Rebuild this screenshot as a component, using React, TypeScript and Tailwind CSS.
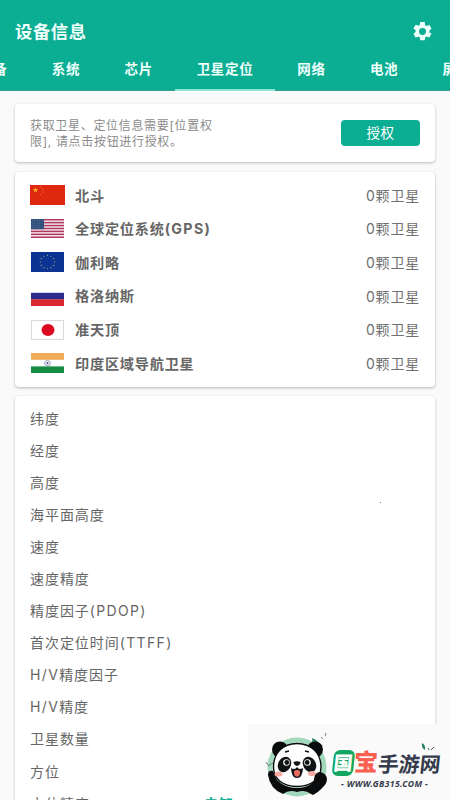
import type { ReactNode } from "react";

const tabs = ["设备", "系统", "芯片", "卫星定位", "网络", "电池", "屏幕"];

const details = [
	"纬度",
	"经度",
	"高度",
	"海平面高度",
	"速度",
	"速度精度",
	"精度因子(PDOP)",
	"首次定位时间(TTFF)",
	"H/V精度因子",
	"H/V精度",
	"卫星数量",
	"方位",
];

const STAR = "M0,-1 L.23,-.32 L.95,-.31 L.37,.12 L.59,.81 L0,.4 L-.59,.81 L-.37,.12 L-.95,-.31 L-.23,-.32Z";

function ChinaFlag() {
	return (
		<svg width="35" height="20" viewBox="0 0 35 20">
			<rect width="35" height="20" fill="#de2910" />
			<path d={STAR} fill="#ffb02e" transform="translate(5.5 5.2) scale(2.9)" />
			{[[10.8, 2], [13, 4], [13, 7], [10.8, 9.2]].map(([x, y]) => (
				<path key={y} d={STAR} fill="#f58a28" transform={`translate(${x} ${y}) scale(1)`} />
			))}
		</svg>
	);
}

function UsaFlag() {
	return (
		<svg width="33" height="19" viewBox="0 0 33 19">
			<rect width="33" height="19" fill="#f4e6ec" />
			{[0, 1, 2, 3, 4, 5, 6].map((i) => (
				<rect key={i} y={i * 2.92} width="33" height="1.46" fill="#b0365c" />
			))}
			<rect width="13" height="10.2" fill="#30507c" />
			{[0, 1, 2, 3].map((r) =>
				[0, 1, 2, 3, 4].map((c) => (
					<circle key={`${r}-${c}`} cx={1.6 + c * 2.4} cy={1.5 + r * 2.4} r=".4" fill="#8fa3bf" />
				))
			)}
		</svg>
	);
}

function EuFlag() {
	return (
		<svg width="33" height="20" viewBox="0 0 33 20">
			<rect width="33" height="20" fill="#0a3394" />
			{Array.from({ length: 12 }, (_, i) => {
				const a = (i * Math.PI) / 6;
				return (
					<path
						key={i}
						d={STAR}
						fill="#b3b765"
						transform={`translate(${16.5 + 7.2 * Math.sin(a)} ${10 - 6.7 * Math.cos(a)}) scale(1)`}
					/>
				);
			})}
		</svg>
	);
}

function RussiaFlag() {
	return (
		<svg width="33" height="20" viewBox="0 0 33 20">
			<rect width="33" height="20" fill="#fff" />
			<rect y="6.8" width="33" height="6.7" fill="#2b2c8b" />
			<rect y="13.3" width="33" height="6.7" fill="#d92830" />
		</svg>
	);
}

function JapanFlag() {
	return (
		<svg width="33" height="20" viewBox="0 0 33 20">
			<rect x=".5" y=".5" width="32" height="19" fill="#fefefe" stroke="#d9d9d9" />
			<ellipse cx="17" cy="10" rx="6.5" ry="5.9" fill="#dc0a1e" />
		</svg>
	);
}

function IndiaFlag() {
	return (
		<svg width="33" height="20" viewBox="0 0 33 20">
			<rect width="33" height="20" fill="#fff" />
			<rect width="33" height="6.8" fill="#f1ac59" />
			<rect y="13.4" width="33" height="6.6" fill="#168d45" />
			<ellipse cx="16.5" cy="10.2" rx="2.9" ry="2.6" fill="none" stroke="#73779b" strokeWidth=".7" />
			<circle cx="16.5" cy="10.2" r="1.1" fill="#54598a" />
		</svg>
	);
}

const satellites: { name: string; flag: ReactNode }[] = [
	{ name: "北斗", flag: <ChinaFlag /> },
	{ name: "全球定位系统(GPS)", flag: <UsaFlag /> },
	{ name: "伽利略", flag: <EuFlag /> },
	{ name: "格洛纳斯", flag: <RussiaFlag /> },
	{ name: "准天顶", flag: <JapanFlag /> },
	{ name: "印度区域导航卫星", flag: <IndiaFlag /> },
];

// latin abbreviations are set a little wider than the chinese text
function Label({ text }: { text: string }) {
	return (
		<>
			{text.split(/([A-Z/()]+)/).map((part, i) =>
				i % 2 ? (
					<span key={i} className="tracking-[1.35px]">
						{part}
					</span>
				) : (
					part
				)
			)}
		</>
	);
}

function Panda() {
	return (
		<svg className="absolute left-3 top-2" width="76" height="68" viewBox="0 0 76 68">
			<circle cx="37" cy="35" r="27" fill="#d9f1e4" stroke="#a3d8bd" strokeWidth="5" />
			<path d="M51 14Q53 9 52 6Q56 7 59 11L63 14Z" fill="#27835d" />
			<path d="M61 5l2 2M65 4l1-3M8 34l5-3M6 30l2 3" stroke="#46685a" strokeWidth=".8" />
			{/* ears */}
			<circle cx="20" cy="17.5" r="8" fill="#090b0c" />
			<circle cx="55" cy="17.5" r="8" fill="#090b0c" />
			{/* body */}
			<path d="M8 43Q8 38 13 39L17 48Q25 56 37 56Q49 56 55 48L58 46L65 50Q63 58 53 63L51 62Q45 57 37 60Q29 57 23 62Q10 57 8 43Z" fill="#090b0c" />
			{/* face */}
			<path d="M37 11.5C52 11.5 61 22 61 35C61 47 51 54.5 37 54.5C23 54.5 13.5 47 13.5 35C13.5 22 22 11.5 37 11.5Z" fill="#fff" stroke="#090b0c" strokeWidth="1.4" />
			<ellipse cx="24.5" cy="32.5" rx="6.3" ry="8" transform="rotate(30 24.5 32.5)" fill="#101314" />
			<ellipse cx="49.5" cy="32.5" rx="6.3" ry="8" transform="rotate(-30 49.5 32.5)" fill="#101314" />
			<circle cx="26.5" cy="30.5" r="3.3" fill="#fff" />
			<circle cx="47.5" cy="30.5" r="3.3" fill="#fff" />
			<circle cx="26.8" cy="30.5" r="2.4" fill="#101314" />
			<circle cx="47.2" cy="30.5" r="2.4" fill="#101314" />
			<path d="M25 20l4-1M45 19l4 1" stroke="#101314" strokeWidth="1.3" />
			<path d="M33.5 30Q37 28.5 40.5 30Q40 33.5 37 34Q34 33.5 33.5 30Z" fill="#101314" />
			<path d="M31 36Q35 38.5 37 35Q39 38.5 43 36Q42.5 46 37 46Q31.5 46 31 36Z" fill="#101314" />
			<path d="M34 39Q37 37 40 39Q40.5 44.5 37 44.8Q33.5 44.5 34 39Z" fill="#eb6b61" />
			<ellipse cx="18.5" cy="42" rx="4" ry="2.6" fill="#f6aaa0" />
			<ellipse cx="52" cy="41.5" rx="4" ry="2.6" fill="#f6aaa0" />
			{/* raised paw */}
			<path d="M54 47Q55 40 60 40Q67 41 67 48Q66 54 60 57L53 54Z" fill="#090b0c" />
		</svg>
	);
}

function Watermark() {
	return (
		<div className="absolute bottom-0 right-0 h-[76px] w-[202px] bg-[#fafafa]">
			<Panda />
			<svg className="absolute left-[173px] top-[18px]" width="16" height="10" viewBox="0 0 16 10">
				<path d="M1 1Q5 3 4 8Q0 6 1 1Z" fill="#27835d" />
				<path d="M7 6l1 2M10 8l3-3" stroke="#47665b" />
			</svg>
			<div className="absolute left-[85px] top-[25px] flex h-[27px] items-center font-black">
				<span className="flex h-[26px] w-[20.5px] -skew-x-6 items-center justify-center rounded-[6px] bg-[#13a663] text-[19px] leading-none text-white">
					国
				</span>
				<span className="w-[23px] -skew-x-3 text-center text-[24px] leading-none text-[#f9604f]">宝</span>
				<span className="ml-px mt-[5px] -skew-x-6 text-[20.8px] font-bold leading-none text-[#343a4b]">手游网</span>
			</div>
			<div className="absolute left-[93px] top-[54px] whitespace-nowrap font-['Noto_Sans'] text-[8.6px] font-bold italic leading-[12px] tracking-[0.35px] text-[#343a4b]">
				- WWW.GB315.COM -
			</div>
		</div>
	);
}

export default function App() {
	return (
		<div className="relative flex h-[800px] w-[450px] flex-col overflow-hidden bg-[#fafafa] font-['Inter','Noto_Sans_CJK_SC',sans-serif] text-[#666]">
			<header className="h-[90.5px] shrink-0 bg-[#0bad93] text-[#effffb]">
				<div className="flex h-[48px] items-end justify-between pl-[15px] pr-4">
					<h1 className="mb-1 text-[17.3px] font-bold leading-6 tracking-[0.6px]">设备信息</h1>
					<svg className="mb-[5px]" width="23" height="23" viewBox="0 0 24 24" fill="currentColor">
						<path d="M19.14 12.94c.04-.3.06-.61.06-.94s-.02-.64-.07-.94l2.03-1.58a.49.49 0 0 0 .12-.61l-1.92-3.32a.49.49 0 0 0-.59-.22l-2.39.96a7 7 0 0 0-1.62-.94l-.36-2.54A.48.48 0 0 0 13.92 2h-3.84a.48.48 0 0 0-.48.41l-.36 2.54c-.59.24-1.13.57-1.62.94l-2.39-.96a.49.49 0 0 0-.59.22L2.72 8.47a.48.48 0 0 0 .12.61l2.03 1.58c-.05.3-.09.63-.09.94s.02.64.07.94l-2.03 1.58a.49.49 0 0 0-.12.61l1.92 3.32c.12.22.37.29.59.22l2.39-.96c.5.38 1.03.7 1.62.94l.36 2.54c.05.24.24.41.48.41h3.84c.24 0 .44-.17.47-.41l.36-2.54c.59-.24 1.13-.56 1.62-.94l2.39.96c.22.08.47 0 .59-.22l1.92-3.32a.48.48 0 0 0-.12-.61zM12 15.6a3.6 3.6 0 1 1 0-7.2 3.6 3.6 0 0 1 0 7.2z" />
					</svg>
				</div>
				<nav className="-ml-[43px] flex h-[42.5px] w-[510px] border-b border-[#3b9d8c]">
					{tabs.map((tab) => (
						<div
							key={tab}
							className={`-mb-px flex shrink-0 justify-center border-b-2 pt-[11px] text-[13.5px] font-bold leading-5 tracking-[0.7px] ${
								tab === "卫星定位" ? "w-[100px] border-[#8fe3d3]" : "w-[72.7px] border-transparent"
							}`}
						>
							{tab}
						</div>
					))}
				</nav>
			</header>

			<main className="flex flex-col gap-[9.5px] px-[15px] pt-[13.5px]">
				<section className="flex h-[58px] shrink-0 items-center justify-between rounded bg-white px-[15px] shadow-[0_1px_3px_rgba(0,0,0,0.25)]">
					<div className="pt-px text-[12px] leading-[15.5px] tracking-[0.68px] text-[#8b8b8b]">
						<p>获取卫星、定位信息需要[位置权</p>
						<p>限], 请点击按钮进行授权。</p>
					</div>
					<button className="h-[26px] w-[79px] rounded-sm bg-[#0bad93] pb-px text-[13.5px] leading-5 tracking-[0.5px] text-white">
						授权
					</button>
				</section>

				<section className="h-[215px] shrink-0 rounded bg-white px-[15px] pt-[7px] shadow-[0_1px_3px_rgba(0,0,0,0.28)]">
					{satellites.map((s) => (
						<div key={s.name} className="flex h-[33.6px] items-center">
							<div className="flex w-[35px] justify-center">{s.flag}</div>
							<span className="ml-2.5 text-[14.2px] font-bold tracking-[0.75px]">
								<Label text={s.name} />
							</span>
							<span className="ml-auto text-[14px] tracking-[0.8px] text-[#707070]">0颗卫星</span>
						</div>
					))}
				</section>

				<section className="relative h-[500px] shrink-0 rounded bg-white px-[15px] pt-[6px] text-[14px] tracking-[0.95px] shadow-[0_1px_3px_rgba(0,0,0,0.25)]">
					{details.map((name) => (
						<div key={name} className="flex h-[32.1px] items-center">
							<Label text={name} />
						</div>
					))}
					<div className="flex h-[32.1px] items-center">
						<span className="w-[174px]">方位精度</span>
						<span className="font-bold text-[#0bad93]">未知</span>
					</div>
					<i className="absolute left-[365px] top-[106px] h-px w-px bg-[#777]" />
				</section>
			</main>

			<Watermark />
		</div>
	);
}
